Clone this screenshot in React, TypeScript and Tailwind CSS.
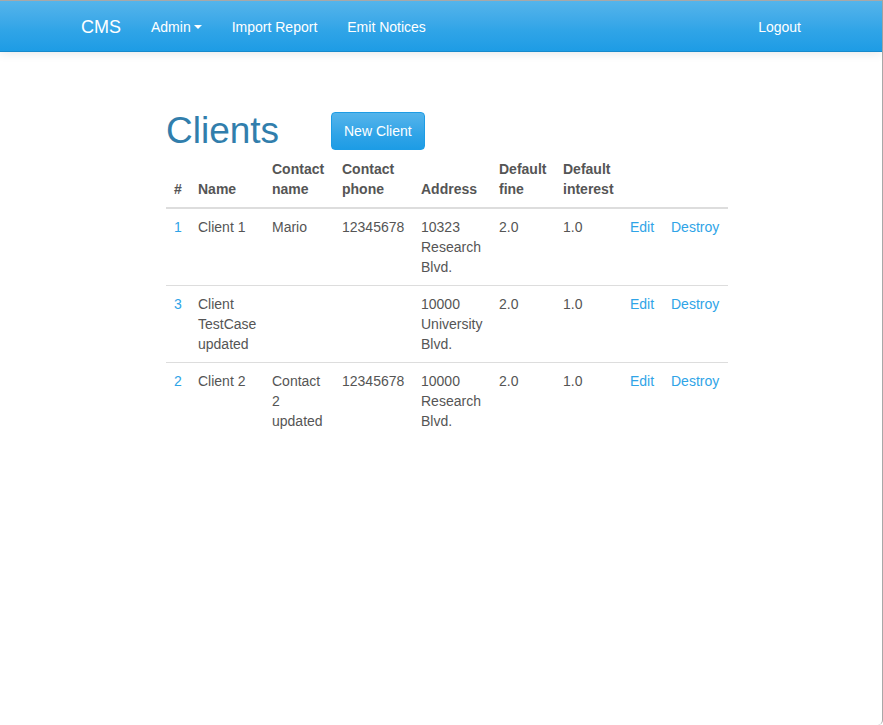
import React from "react";

const clients = [
  {
    id: 1,
    name: "Client 1",
    contactName: "Mario",
    contactPhone: "12345678",
    address: "10323 Research Blvd.",
    fine: "2.0",
    interest: "1.0",
  },
  {
    id: 3,
    name: "Client TestCase updated",
    contactName: "",
    contactPhone: "",
    address: "10000 University Blvd.",
    fine: "2.0",
    interest: "1.0",
  },
  {
    id: 2,
    name: "Client 2",
    contactName: "Contact 2 updated",
    contactPhone: "12345678",
    address: "10000 Research Blvd.",
    fine: "2.0",
    interest: "1.0",
  },
];

const Navbar = () => {
  return (
    <nav className="relative z-10 h-[52px] border-t border-[#a8a8a8] border-b border-b-[#178acc] bg-linear-to-b from-[#54b4eb] via-[#2fa4e7] via-60% to-[#1d9ce5] shadow-[0_1px_10px_rgba(0,0,0,0.1)]">
      <div className="mx-auto flex h-full w-[750px] items-center justify-between pt-[2px] text-white">
        <div className="flex items-center">
          <a className="px-[15px] text-[18px] leading-[20px]">CMS</a>
          <a className="flex items-center px-[15px] text-[14px] leading-[20px]">
            Admin
            <span className="ml-[3px] inline-block h-0 w-0 border-x-4 border-t-4 border-x-transparent border-t-white" />
          </a>
          <a className="px-[15px] text-[14px] leading-[20px]">Import Report</a>
          <a className="px-[15px] text-[14px] leading-[20px]">Emit Notices</a>
        </div>
        <a className="px-[15px] text-[14px] leading-[20px]">Logout</a>
      </div>
    </nav>
  );
};

const App = () => {
  return (
    <div
      className="min-h-[725px] rounded-b-[5px] border-r border-[#a8a8a8] bg-white text-[14px] leading-[20px] text-[#555555]"
      style={{ fontFamily: '"Liberation Sans", Arial, sans-serif' }}
    >
      <Navbar />
      <div className="ml-[166px] pt-[59px]">
        <div className="flex h-[40px] items-center">
          <h1 className="w-[165px] text-[37px] leading-[40px] font-medium text-[#317eac]">
            Clients
          </h1>
          <button className="h-[38px] rounded-[4px] border border-[#1d9ce5] bg-linear-to-b from-[#54b4eb] via-[#2fa4e7] via-60% to-[#1d9ce5] px-[12px] text-[14px] text-white">
            New Client
          </button>
        </div>
        <table className="w-[562px] table-fixed border-collapse">
          <colgroup>
            <col className="w-[24px]" />
            <col className="w-[74px]" />
            <col className="w-[70px]" />
            <col className="w-[79px]" />
            <col className="w-[78px]" />
            <col className="w-[64px]" />
            <col className="w-[67px]" />
            <col className="w-[41px]" />
            <col className="w-[65px]" />
          </colgroup>
          <thead>
            <tr className="border-b-2 border-[#dddddd] text-left align-bottom font-bold">
              <th className="p-2">#</th>
              <th className="p-2">Name</th>
              <th className="p-2">Contact name</th>
              <th className="p-2">Contact phone</th>
              <th className="p-2">Address</th>
              <th className="p-2">Default fine</th>
              <th className="p-2">Default interest</th>
              <th className="p-2"></th>
              <th className="p-2"></th>
            </tr>
          </thead>
          <tbody>
            {clients.map((c, i) => (
              <tr
                key={c.id}
                className={`align-top ${i > 0 ? "border-t border-[#dddddd]" : ""}`}
              >
                <td className="p-2 text-[#2fa4e7]">{c.id}</td>
                <td className="p-2">{c.name}</td>
                <td className="p-2">{c.contactName}</td>
                <td className="p-2">{c.contactPhone}</td>
                <td className="p-2">{c.address}</td>
                <td className="p-2">{c.fine}</td>
                <td className="p-2">{c.interest}</td>
                <td className="p-2 text-[#2fa4e7]">Edit</td>
                <td className="p-2 text-[#2fa4e7]">Destroy</td>
              </tr>
            ))}
          </tbody>
        </table>
      </div>
    </div>
  );
};

export default App;
